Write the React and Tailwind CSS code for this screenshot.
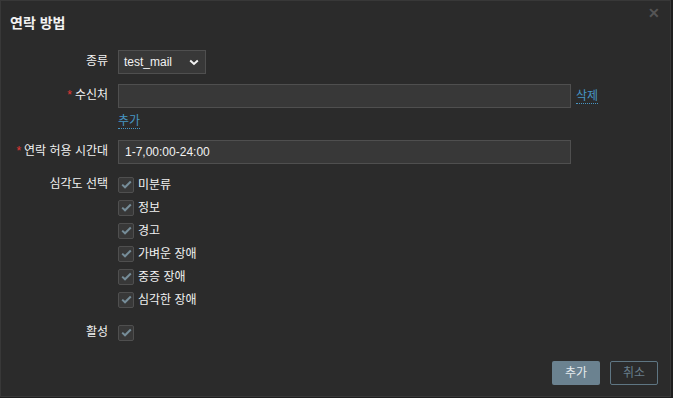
import { useState } from 'react';

const font = { fontFamily: 'Arial, "Liberation Sans", "Noto Sans CJK KR", sans-serif' };

function Check({ checked = true }) {
  return (
    <span className="w-[16px] h-[16px] flex items-center justify-center bg-[#383838] border border-[#4f4f4f] rounded-[2px] shrink-0">
      {checked && (
        <svg width="11" height="9" viewBox="0 0 11 9">
          <path d="M1.2 4.6 L4 7.3 L9.8 1.5" fill="none" stroke="#768d99" strokeWidth="2" />
        </svg>
      )}
    </span>
  );
}

function Row({ label, required, children, className = '' }) {
  return (
    <div className={`flex items-start ${className}`}>
      <div className="w-[107px] shrink-0 text-right text-[12px] text-[#f2f2f2] leading-[23px]">
        {required && <span className="text-[#e33734] mr-[3px]">*</span>}
        {label}
      </div>
      <div className="ml-[10px] flex-1">{children}</div>
    </div>
  );
}

export default function App() {
  const [severities] = useState(['미분류', '정보', '경고', '가벼운 장애', '중증 장애', '심각한 장애']);

  return (
    <div className="w-[673px] h-[398px] bg-[#1e1e1e]" style={font}>
      <div className="relative w-[671px] h-[397px] bg-[#2b2b2b] border border-[#383838]">
        <div className="h-[44px] pl-[9px] pt-[12px] text-[14px] font-bold text-[#f2f2f2] leading-[20px]">연락 방법</div>
        <button className="absolute right-[10px] top-[5px] text-[#555] text-[14px] font-bold leading-none">✕</button>

        <div className="flex flex-col">
          <Row label="종류" className="mt-[5px]">
            <div className="w-[88px] h-[24px] bg-[#383838] border border-[#4f4f4f] flex items-center justify-between pl-[5px] pr-[6px] text-[12px] text-[#f2f2f2]">
              <span>test_mail</span>
              <svg width="10" height="7" viewBox="0 0 10 7">
                <path d="M1.2 1.5 L5 5 L8.8 1.5" fill="none" stroke="#f2f2f2" strokeWidth="2" />
              </svg>
            </div>
          </Row>

          <Row label="수신처" required className="mt-[10px]">
            <div className="flex items-center">
              <div className="w-[453px] h-[24px] bg-[#383838] border border-[#4f4f4f]" />
              <span className="ml-[5px] text-[12px] text-[#4796c4] border-b border-dotted border-[#4796c4] leading-[14px]">삭제</span>
            </div>
            <div className="mt-[5px] leading-[14px]">
              <span className="text-[12px] text-[#4796c4] border-b border-dotted border-[#4796c4] leading-[14px]">추가</span>
            </div>
          </Row>

          <Row label="연락 허용 시간대" required className="mt-[12px]">
            <div className="w-[453px] h-[24px] bg-[#383838] border border-[#4f4f4f] flex items-center px-[6px] text-[12px] text-[#f2f2f2]">
              1-7,00:00-24:00
            </div>
          </Row>

          <Row label="심각도 선택" className="mt-[9px]">
            <div className="flex flex-col">
              {severities.map((s) => (
                <div key={s} className="h-[23px] flex items-center gap-[4px] text-[12px] text-[#f2f2f2]">
                  <Check />
                  <span>{s}</span>
                </div>
              ))}
            </div>
          </Row>

          <Row label="활성" className="mt-[10px]">
            <div className="h-[23px] flex items-center">
              <Check />
            </div>
          </Row>
        </div>

        <div className="absolute right-[12px] bottom-[11px] flex gap-[10px]">
          <button className="w-[48px] h-[24px] bg-[#6b8290] text-[#e6ebee] text-[12px] rounded-[2px]">추가</button>
          <button className="w-[48px] h-[24px] border border-[#5f7683] text-[#687e8b] text-[12px] rounded-[2px]">취소</button>
        </div>
      </div>
    </div>
  );
}
